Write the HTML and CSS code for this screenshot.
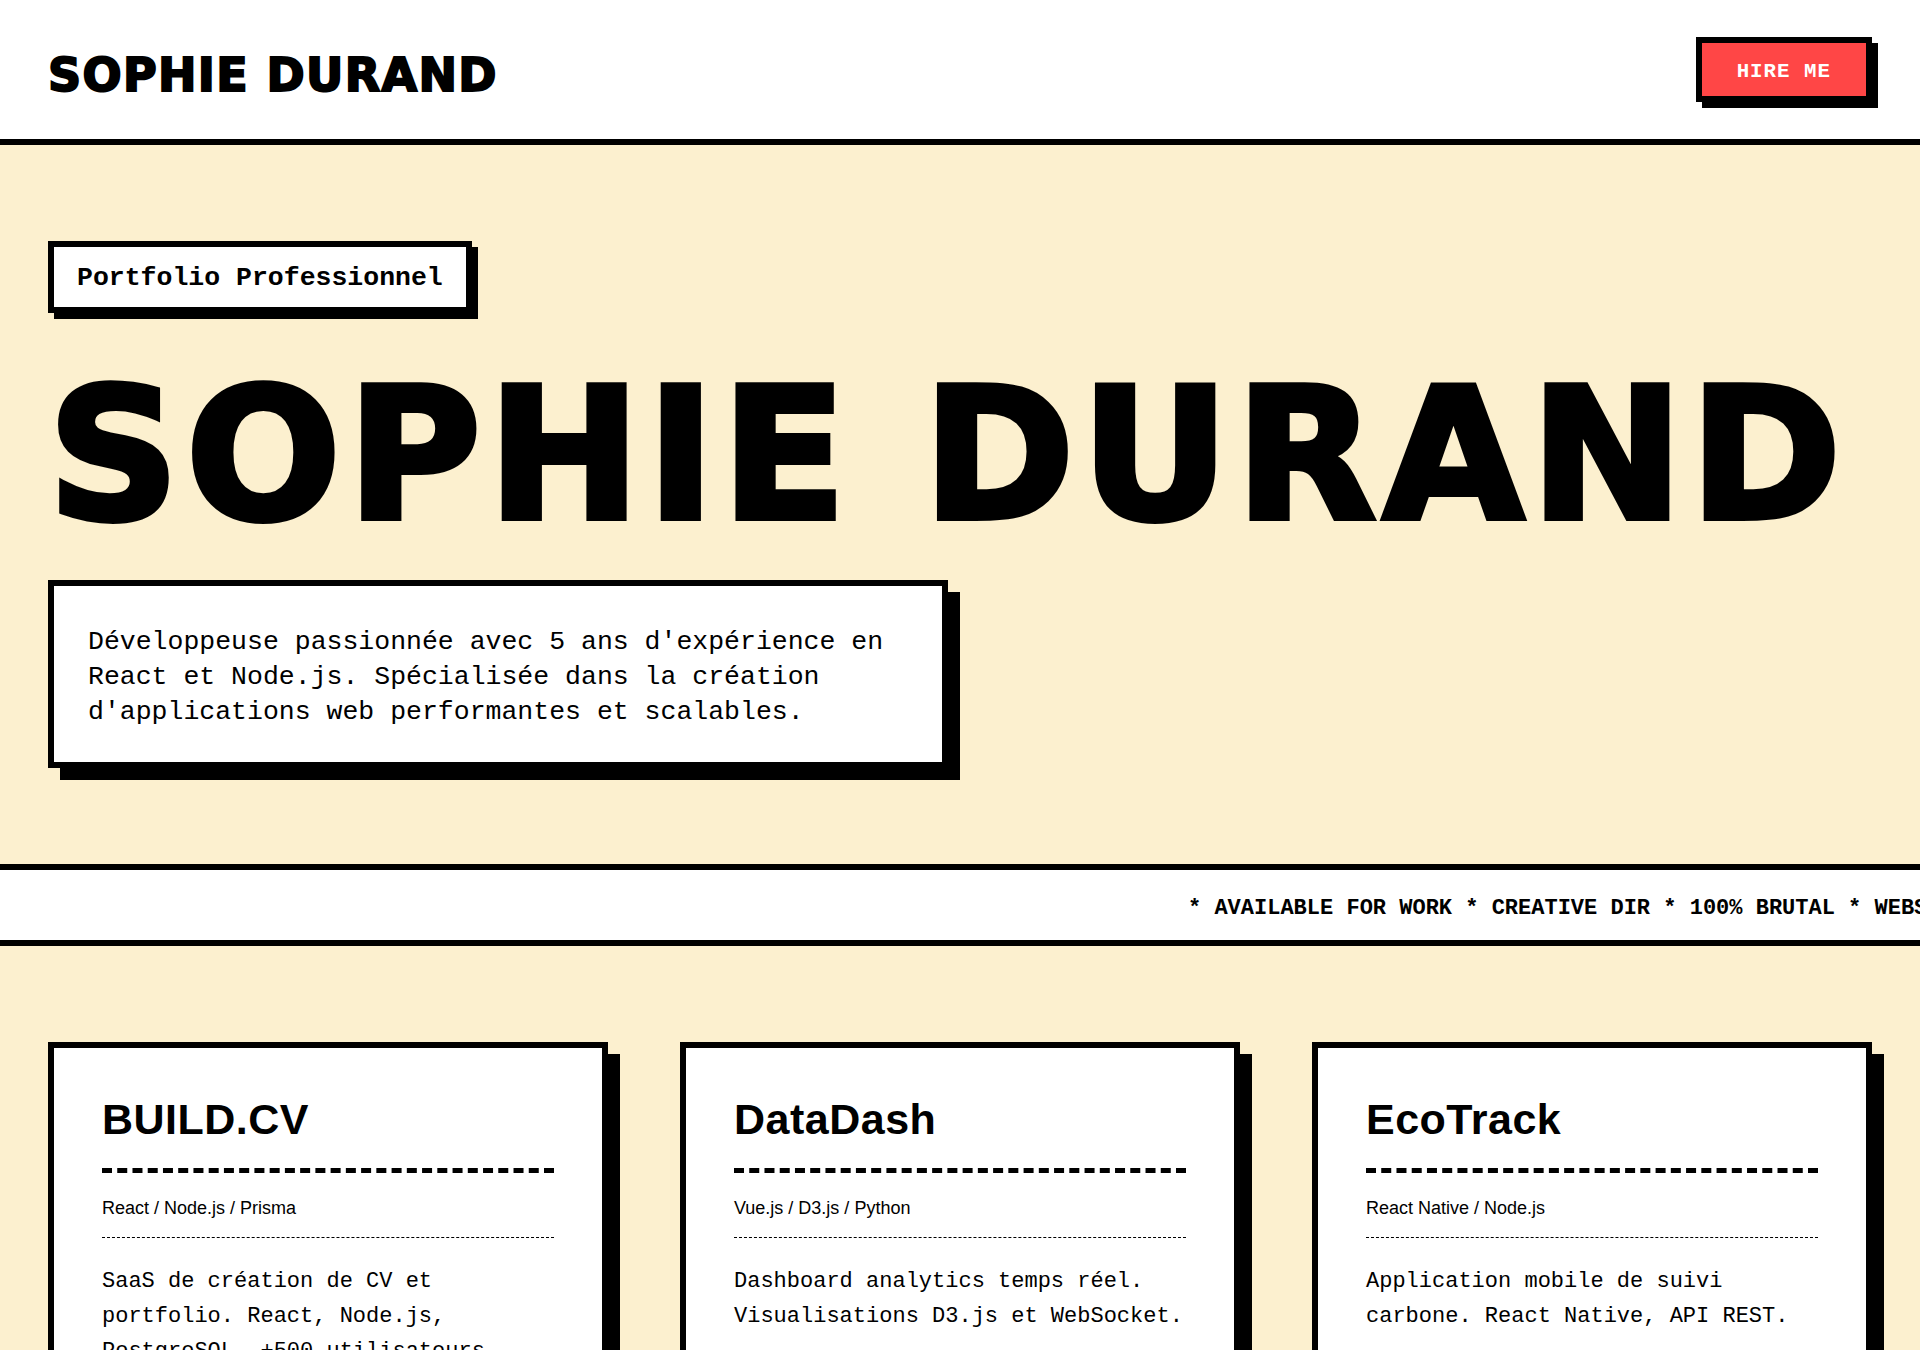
FILE: index.html
```html
<!DOCTYPE html>
<html lang="fr">
<head>
<meta charset="utf-8">
<title>Sophie Durand — Portfolio</title>
<link rel="stylesheet" href="styles.css">
</head>
<body>
<header class="site-header">
  <div class="logo">SOPHIE DURAND</div>
  <a class="btn-hire" href="#contact">HIRE ME</a>
</header>

<section class="hero">
  <div class="badge">Portfolio Professionnel</div>
  <h1 class="hero-title">SOPHIE DURAND</h1>
  <div class="hero-desc">
    <p>Développeuse passionnée avec 5 ans d'expérience en React et Node.js. Spécialisée dans la création d'applications web performantes et scalables.</p>
  </div>
</section>

<div class="marquee">
  <div class="marquee-track">* AVAILABLE FOR WORK * CREATIVE DIR * 100% BRUTAL * WEBSITES &amp; APPS * AVAILABLE FOR WORK * CREATIVE DIR * 100% BRUTAL *</div>
</div>

<section class="projects">
  <article class="card">
    <h2 class="card-title">BUILD.CV</h2>
    <div class="card-tech">React / Node.js / Prisma</div>
    <p class="card-desc">SaaS de création de CV et portfolio. React, Node.js, PostgreSQL. +500 utilisateurs.</p>
  </article>
  <article class="card">
    <h2 class="card-title">DataDash</h2>
    <div class="card-tech">Vue.js / D3.js / Python</div>
    <p class="card-desc">Dashboard analytics temps réel. Visualisations D3.js et WebSocket.</p>
  </article>
  <article class="card">
    <h2 class="card-title">EcoTrack</h2>
    <div class="card-tech">React Native / Node.js</div>
    <p class="card-desc">Application mobile de suivi carbone. React Native, API REST.</p>
  </article>
</section>
</body>
</html>
```

FILE: styles.css
```css
* {
  box-sizing: border-box;
  margin: 0;
  padding: 0;
}

body {
  background: #fcf0cf;
  color: #000;
  font-family: "Liberation Mono", "DejaVu Sans Mono", monospace;
}

/* Header */
.site-header {
  display: flex;
  justify-content: space-between;
  align-items: flex-end;
  padding: 37px 48px;
  background: #fff;
  border-bottom: 6px solid #000;
}

.logo {
  font-family: "DejaVu Sans", sans-serif;
  font-weight: 700;
  font-size: 46px;
  letter-spacing: 1.35px;
  -webkit-text-stroke: 2px #000;
  line-height: normal;
}

.btn-hire {
  display: inline-block;
  background: #ff4646;
  color: #fff;
  font-weight: 700;
  font-size: 20.8px;
  letter-spacing: 1px;
  padding: 17px 35px 13px;
  border: 6px solid #000;
  box-shadow: 6px 6px 0 #000;
  text-decoration: none;
}

/* Hero */
.hero {
  display: flex;
  flex-direction: column;
  align-items: flex-start;
  padding: 96px 48px;
}

.badge {
  background: #fff;
  border: 6px solid #000;
  box-shadow: 6px 6px 0 #000;
  padding: 16px 23px 14px;
  font-weight: 700;
  font-size: 26.5px;
}

.hero-title {
  font-family: "DejaVu Sans", sans-serif;
  font-weight: 700;
  font-size: 182px;
  letter-spacing: 6.9px;
  -webkit-text-stroke: 6px #000;
  line-height: 1;
  white-space: nowrap;
  margin: 51px 0 34px;
}

.hero-desc {
  width: 900px;
  background: #fff;
  border: 6px solid #000;
  box-shadow: 12px 12px 0 #000;
  padding: 39px 34px 32px;
  font-size: 26.5px;
  line-height: 35px;
}

/* Marquee */
.marquee {
  background: #fff;
  border-top: 6px solid #000;
  border-bottom: 6px solid #000;
  overflow: hidden;
  padding: 26px 0 19px;
}

.marquee-track {
  white-space: nowrap;
  font-weight: 700;
  font-size: 22px;
  transform: translateX(1188px);
}

/* Projects */
.projects {
  display: grid;
  grid-template-columns: repeat(3, 1fr);
  gap: 72px;
  padding: 96px 48px;
}

.card {
  background: #fff;
  border: 6px solid #000;
  box-shadow: 12px 12px 0 #000;
  padding: 47px 48px 48px;
}

.card-title {
  font-family: "Liberation Sans", Arial, sans-serif;
  font-weight: 700;
  font-size: 43px;
  letter-spacing: 0.5px;
  padding-bottom: 24px;
  border-bottom: 5px dashed #000;
  margin-bottom: 25px;
}

.card-tech {
  font-family: "Liberation Sans", Arial, sans-serif;
  font-size: 18px;
  padding-bottom: 18px;
  border-bottom: 1px dashed #000;
  margin-bottom: 26px;
}

.card-desc {
  font-size: 22px;
  line-height: 1.6;
}
```
